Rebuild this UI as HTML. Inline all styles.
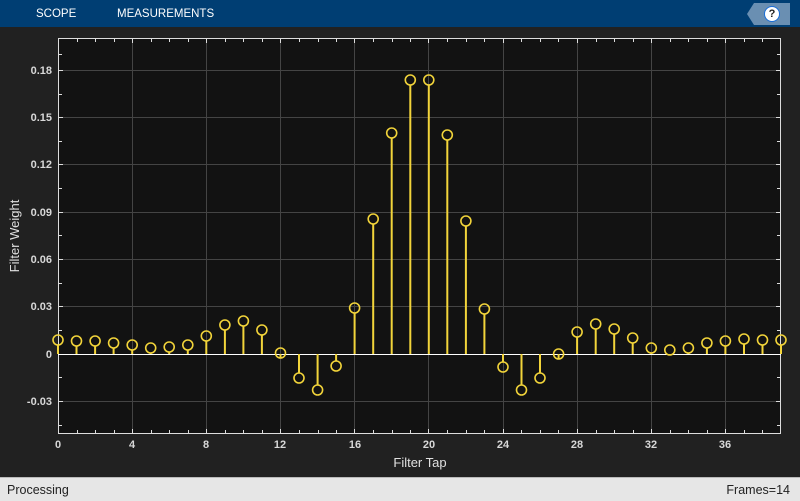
<!DOCTYPE html>
<html><head><meta charset="utf-8"><style>
body{margin:0;width:800px;height:500px;overflow:hidden;background:#212121;font-family:"Liberation Sans",sans-serif;position:relative}
.top{position:absolute;left:0;top:0;width:800px;height:27px;background:#003e73}
.top span{position:absolute;top:8px;color:#fff;font-size:11.5px}
.status{position:absolute;left:0;top:477px;width:800px;height:23px;background:#e6e6e6;border-top:1px solid #bbb;font-size:12.5px;color:#222}
svg{position:absolute;left:0;top:0}
</style></head><body>
<div class="top"><span style="left:36px">SCOPE</span><span style="left:117px">MEASUREMENTS</span>
<div style="position:absolute;left:747px;top:3px;width:0;height:0;border-top:11px solid transparent;border-bottom:11px solid transparent;border-right:7px solid #6a8fb2"></div>
<div style="position:absolute;left:754px;top:3px;width:36px;height:22px;background:#6a8fb2"></div>
<div style="position:absolute;left:764px;top:6px;width:14px;height:14px;border-radius:50%;background:#fff;border:1px solid #1a6ed8;font-size:11px;font-weight:bold;text-align:center;line-height:14px;color:#222">?</div>
</div>
<svg width="800" height="477" font-family="Liberation Sans" font-size="11" fill="#e0e0e0">
<rect x="58" y="38" width="723" height="396" fill="#121212"/>
<g stroke="#444" stroke-width="1">
<line x1="58" x2="781" y1="70.5" y2="70.5"/><line x1="58" x2="781" y1="117.5" y2="117.5"/><line x1="58" x2="781" y1="164.5" y2="164.5"/><line x1="58" x2="781" y1="212.5" y2="212.5"/><line x1="58" x2="781" y1="259.5" y2="259.5"/><line x1="58" x2="781" y1="306.5" y2="306.5"/><line x1="58" x2="781" y1="401.5" y2="401.5"/>
<line y1="38" y2="434" x1="132.5" x2="132.5"/><line y1="38" y2="434" x1="206.5" x2="206.5"/><line y1="38" y2="434" x1="280.5" x2="280.5"/><line y1="38" y2="434" x1="354.5" x2="354.5"/><line y1="38" y2="434" x1="428.5" x2="428.5"/><line y1="38" y2="434" x1="503.5" x2="503.5"/><line y1="38" y2="434" x1="577.5" x2="577.5"/><line y1="38" y2="434" x1="651.5" x2="651.5"/><line y1="38" y2="434" x1="725.5" x2="725.5"/>
</g>
<g stroke="#ddd" stroke-width="1">
<path d="M58 54.5h4M58 70.5h5M58 94.5h4M58 117.5h5M58 141.5h4M58 164.5h5M58 188.5h4M58 212.5h5M58 235.5h4M58 259.5h5M58 283.5h4M58 306.5h5M58 330.5h4M58 377.5h4M58 401.5h5M58 425.5h4"/>
<path d="M77.5 434v-4M95.5 434v-4M114.5 434v-4M132.5 434v-5M151.5 434v-4M169.5 434v-4M188.5 434v-4M206.5 434v-5M225.5 434v-4M243.5 434v-4M262.5 434v-4M280.5 434v-5M299.5 434v-4M318.5 434v-4M336.5 434v-4M354.5 434v-5M373.5 434v-4M392.5 434v-4M410.5 434v-4M428.5 434v-5M447.5 434v-4M466.5 434v-4M484.5 434v-4M503.5 434v-5M521.5 434v-4M540.5 434v-4M558.5 434v-4M577.5 434v-5M596.5 434v-4M614.5 434v-4M633.5 434v-4M651.5 434v-5M670.5 434v-4M688.5 434v-4M707.5 434v-4M725.5 434v-5M744.5 434v-4M762.5 434v-4"/>
<path d="M77.5 38v4M95.5 38v4M114.5 38v4M132.5 38v5M151.5 38v4M169.5 38v4M188.5 38v4M206.5 38v5M225.5 38v4M243.5 38v4M262.5 38v4M280.5 38v5M299.5 38v4M318.5 38v4M336.5 38v4M354.5 38v5M373.5 38v4M392.5 38v4M410.5 38v4M428.5 38v5M447.5 38v4M466.5 38v4M484.5 38v4M503.5 38v5M521.5 38v4M540.5 38v4M558.5 38v4M577.5 38v5M596.5 38v4M614.5 38v4M633.5 38v4M651.5 38v5M670.5 38v4M688.5 38v4M707.5 38v4M725.5 38v5M744.5 38v4M762.5 38v4"/>
<path d="M781 54.5h-4M781 70.5h-5M781 94.5h-4M781 117.5h-5M781 141.5h-4M781 164.5h-5M781 188.5h-4M781 212.5h-5M781 235.5h-4M781 259.5h-5M781 283.5h-4M781 306.5h-5M781 330.5h-4M781 377.5h-4M781 401.5h-5M781 425.5h-4"/>
</g>
<rect x="58.5" y="38.5" width="722" height="395" fill="none" stroke="#ddd"/>
<line x1="58" x2="781" y1="354.5" y2="354.5" stroke="#fff"/>
<g text-anchor="end" font-weight="bold" fill="#d8d8d8">
<text x="52" y="74">0.18</text><text x="52" y="121">0.15</text><text x="52" y="168">0.12</text><text x="52" y="216">0.09</text><text x="52" y="263">0.06</text><text x="52" y="310">0.03</text><text x="52" y="358">0</text><text x="52" y="405">-0.03</text>
</g>
<g text-anchor="middle">
<g font-weight="bold" fill="#d8d8d8">
<text x="58" y="448">0</text><text x="132" y="448">4</text><text x="206" y="448">8</text><text x="280" y="448">12</text><text x="355" y="448">16</text><text x="429" y="448">20</text><text x="503" y="448">24</text><text x="577" y="448">28</text><text x="651" y="448">32</text><text x="725" y="448">36</text>
</g>
<text x="420" y="467" font-size="13">Filter Tap</text>
<text transform="translate(19,236) rotate(-90)" font-size="13">Filter Weight</text>
</g>
<g stroke="#f2d43a" stroke-width="2" fill="none">
<path d="M58 354V345M76.5 354V346M95.1 354V346M113.6 354V348M132.2 354V350M150.7 354V353M169.2 354V352M187.8 354V350M206.3 354V341M224.9 354V330M243.4 354V326M261.9 354V335M280.5 354V358M299 354V373M317.6 354V385M336.1 354V361M354.6 354V313M373.2 354V224M391.7 354V138M410.3 354V85M428.8 354V85M447.3 354V140M465.9 354V226M484.4 354V314M503 354V362M521.5 354V385M540 354V373M558.6 354V359M577.1 354V337M595.7 354V329M614.2 354V334M632.7 354V343M651.3 354V353M669.8 354V355M688.4 354V353M706.9 354V348M725.4 354V346M744 354V344M762.5 354V345M781 354V345"/>
<g stroke-width="1.6">
<circle cx="58" cy="340" r="5"/><circle cx="76.5" cy="341" r="5"/><circle cx="95.1" cy="341" r="5"/><circle cx="113.6" cy="343" r="5"/><circle cx="132.2" cy="345" r="5"/><circle cx="150.7" cy="348" r="5"/><circle cx="169.2" cy="347" r="5"/><circle cx="187.8" cy="345" r="5"/><circle cx="206.3" cy="336" r="5"/><circle cx="224.9" cy="325" r="5"/><circle cx="243.4" cy="321" r="5"/><circle cx="261.9" cy="330" r="5"/><circle cx="280.5" cy="353" r="5"/><circle cx="299" cy="378" r="5"/><circle cx="317.6" cy="390" r="5"/><circle cx="336.1" cy="366" r="5"/><circle cx="354.6" cy="308" r="5"/><circle cx="373.2" cy="219" r="5"/><circle cx="391.7" cy="133" r="5"/><circle cx="410.3" cy="80" r="5"/><circle cx="428.8" cy="80" r="5"/><circle cx="447.3" cy="135" r="5"/><circle cx="465.9" cy="221" r="5"/><circle cx="484.4" cy="309" r="5"/><circle cx="503" cy="367" r="5"/><circle cx="521.5" cy="390" r="5"/><circle cx="540" cy="378" r="5"/><circle cx="558.6" cy="354" r="5"/><circle cx="577.1" cy="332" r="5"/><circle cx="595.7" cy="324" r="5"/><circle cx="614.2" cy="329" r="5"/><circle cx="632.7" cy="338" r="5"/><circle cx="651.3" cy="348" r="5"/><circle cx="669.8" cy="350" r="5"/><circle cx="688.4" cy="348" r="5"/><circle cx="706.9" cy="343" r="5"/><circle cx="725.4" cy="341" r="5"/><circle cx="744" cy="339" r="5"/><circle cx="762.5" cy="340" r="5"/><circle cx="781" cy="340" r="5"/>
</g></g>
</svg>
<div class="status"><span style="position:absolute;left:7px;top:5px">Processing</span><span style="position:absolute;right:10px;top:5px">Frames=14</span></div>
</body></html>
